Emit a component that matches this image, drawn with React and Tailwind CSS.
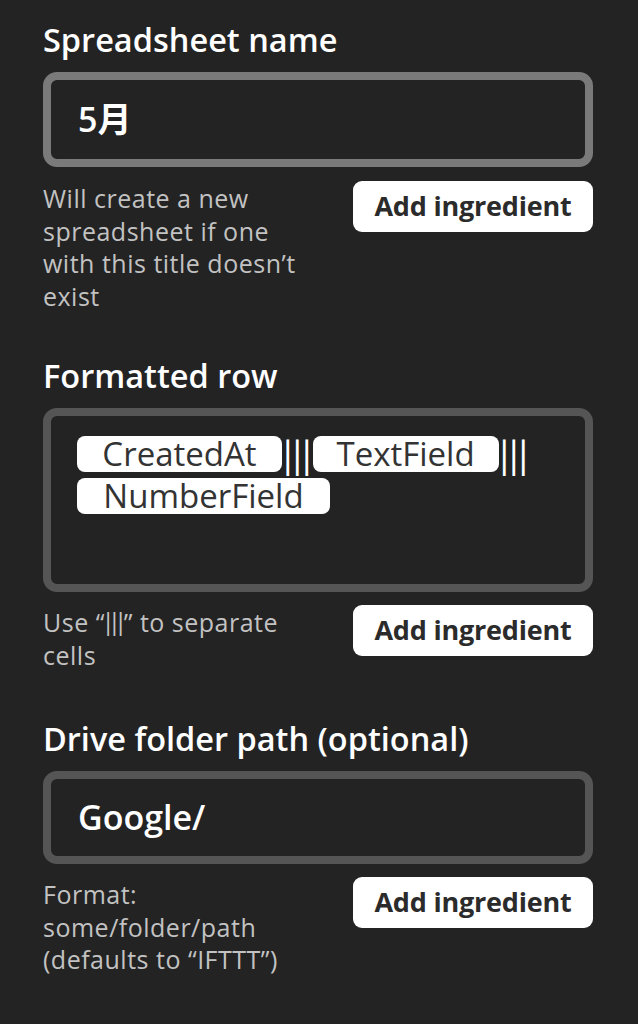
import React from "react";

const font = { fontFamily: '"Open Sans", "Noto Sans CJK JP", sans-serif' };
const barFont = { fontFamily: '"Lato", sans-serif' };

function Button() {
  return (
    <div className="w-[240px] h-[51px] shrink-0 rounded-[9px] bg-white flex items-center justify-center text-[27px] font-bold text-[#2b2b2b] tracking-[-0.2px]">
      Add ingredient
    </div>
  );
}

function Chip({ w, children }) {
  return (
    <span className={`h-[36px] rounded-[8px] bg-white text-[#333] text-[33px] font-medium leading-[36px] flex items-center justify-center ${w}`}>
      {children}
    </span>
  );
}

function Bars() {
  return (
    <span style={barFont} className="text-white text-[38px] leading-[36px] mx-[1px] font-normal">|||</span>
  );
}

function Helper({ children }) {
  return (
    <div className="flex-1 text-[25px] leading-[32.5px] tracking-[0.5px] text-[#c2c2c2] pt-[1px]">
      {children}
    </div>
  );
}

function Title({ children, className = "" }) {
  return (
    <div className={`text-[32.5px] leading-[40px] font-semibold mb-[12px] ${className}`}>{children}</div>
  );
}

export default function App() {
  return (
    <div style={font} className="w-[638px] min-h-[1024px] bg-[#232323] pl-[43px] pr-[45px] pt-[20px] text-white">
      {/* Section 1 */}
      <Title>Spreadsheet name</Title>
      <div className="h-[95px] rounded-[14px] border-[8px] border-[#7a7a7a] flex items-center pl-[27px] text-[34px] font-semibold">
        5月
      </div>
      <div className="flex mt-[14px]">
        <Helper>
          Will create a new<br />spreadsheet if one<br />with this title doesn’t<br />exist
        </Helper>
        <Button />
      </div>

      {/* Section 2 */}
      <Title className="mt-[44px]">Formatted row</Title>
      <div className="h-[184px] rounded-[14px] border-[8px] border-[#555555] pl-[26px] pt-[20px]">
        <div className="flex flex-wrap items-center gap-y-[6px]">
          <Chip w="w-[205px]">CreatedAt</Chip>
          <Bars />
          <Chip w="w-[186px]">TextField</Chip>
          <Bars />
          <Chip w="w-[253px]">NumberField</Chip>
        </div>
      </div>
      <div className="flex mt-[13px]">
        <Helper>
          Use “<span style={barFont} className="tracking-[0px]">|||</span>” to separate<br />cells
        </Helper>
        <Button />
      </div>

      {/* Section 3 */}
      <Title className="mt-[48px]">Drive folder path (optional)</Title>
      <div className="h-[93px] rounded-[14px] border-[8px] border-[#555555] flex items-center pl-[27px] text-[34px] font-semibold">
        Google/
      </div>
      <div className="flex mt-[13px]">
        <Helper>
          Format:<br />some/folder/path<br />(defaults to “IFTTT”)
        </Helper>
        <Button />
      </div>
    </div>
  );
}
